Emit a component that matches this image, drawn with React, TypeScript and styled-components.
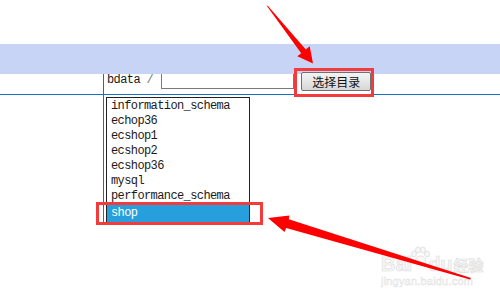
import React from "react";
import styled, { createGlobalStyle } from "styled-components";

const GlobalStyle = createGlobalStyle`
  html, body {
    margin: 0;
    padding: 0;
    background: #ffffff;
  }
  * {
    box-sizing: border-box;
  }
`;

const Page = styled.div`
  position: relative;
  width: 500px;
  height: 300px;
  overflow: hidden;
  background: #ffffff;
  font-family: "Liberation Mono", "DejaVu Sans Mono", monospace;
`;

const TopSpace = styled.div`
  height: 44px;
`;

const Band = styled.div`
  height: 30px;
  background: #c8d4f5;
`;

const FormRow = styled.div`
  display: flex;
  align-items: flex-start;
  height: 21px;
  border-bottom: 1px solid #1670c4;
`;

const Gutter = styled.div`
  width: 104px;
  flex: none;
  align-self: stretch;
  border-right: 1px solid #1670c4;
`;

const Label = styled.span`
  margin-left: 3px;
  font-size: 12px;
  line-height: 12px;
  letter-spacing: -0.6px;
  color: #1a1a1a;

  em {
    font-style: normal;
    color: #777;
  }
`;

const PathInput = styled.input`
  margin-left: 8px;
  width: 133px;
  height: 15px;
  padding: 0;
  border: 1px solid #7a7a7a;
  border-top: none;
  background: #fff;
  outline: none;
`;

const Button = styled.button`
  margin: -2px 0 0 7px;
  width: 70px;
  height: 19px;
  padding: 0;
  border: 1px solid #707070;
  border-radius: 2px;
  background: linear-gradient(#f3f3f3, #e6e6e6 50%, #d6d6d6);
  font-family: "Noto Sans CJK SC", "Noto Sans", sans-serif;
  font-size: 12px;
  line-height: 17px;
  color: #111;
`;

const ListRow = styled.div`
  display: flex;
  align-items: flex-start;
`;

const ListBox = styled.ul`
  margin: 2px 0 0 2px;
  padding: 1px 0 0;
  width: 144px;
  list-style: none;
  border: 1px solid #222;
`;

const Option = styled.li<{ $selected?: boolean }>`
  height: ${(p) => (p.$selected ? "18px" : "15px")};
  padding-left: 4px;
  font-size: 12px;
  line-height: ${(p) => (p.$selected ? "18px" : "15px")};
  letter-spacing: -0.6px;
  white-space: nowrap;
  color: ${(p) => (p.$selected ? "#ffffff" : "#1a1a1a")};
  background: ${(p) => (p.$selected ? "#269fdc" : "transparent")};
`;

const Highlight = styled.div<{ $x: number; $y: number; $w: number; $h: number }>`
  position: absolute;
  left: ${(p) => p.$x}px;
  top: ${(p) => p.$y}px;
  width: ${(p) => p.$w}px;
  height: ${(p) => p.$h}px;
  border: 3px solid #f43b3b;
  pointer-events: none;
`;

const Overlay = styled.svg`
  position: absolute;
  left: 0;
  top: 0;
  pointer-events: none;
`;

const Watermark = styled.div`
  position: absolute;
  left: 381px;
  top: 244px;
  color: #f7f7f7;
  -webkit-text-stroke: 0.7px #e0e0e0;
  font-family: "Liberation Sans", Arial, sans-serif;
  pointer-events: none;
`;

const MarkLine = styled.div`
  display: flex;
  align-items: flex-end;
  height: 30px;
  font-size: 20px;
  font-weight: bold;
  line-height: 20px;
  white-space: nowrap;
`;

const MarkCn = styled.span`
  margin-left: 1px;
  font-family: "Noto Sans CJK SC", sans-serif;
  font-size: 15px;
  font-weight: bold;
  line-height: 18px;
`;

const MarkUrl = styled.div`
  font-size: 11px;
  line-height: 14px;
  letter-spacing: 0.2px;
  -webkit-text-stroke: 0.4px #e0e0e0;
`;

const Paw = () => (
  <svg width="22" height="20" viewBox="0 0 22 20" style={{ marginLeft: -3, marginRight: -3, marginBottom: 8 }}>
    <g fill="#f8f8f8" stroke="#dedede" strokeWidth="0.9">
      <ellipse cx="5" cy="8" rx="2.4" ry="3" />
      <ellipse cx="9" cy="4" rx="2.4" ry="3" />
      <ellipse cx="14" cy="4" rx="2.4" ry="3" />
      <ellipse cx="18" cy="8" rx="2.4" ry="3" />
      <path d="M11.5 10 C7 10 5 15 7 17.5 C9 19 14 19 16 17.5 C18 15 16 10 11.5 10 Z" />
    </g>
  </svg>
);

const databases = [
  "information_schema",
  "echop36",
  "ecshop1",
  "ecshop2",
  "ecshop36",
  "mysql",
  "performance_schema",
  "shop",
];

export default function App() {
  return (
    <Page>
      <GlobalStyle />
      <TopSpace />
      <Band />
      <FormRow>
        <Gutter />
        <Label>
          bdata <em>/</em>
        </Label>
        <PathInput readOnly value="" />
        <Button>选择目录</Button>
      </FormRow>
      <ListRow>
        <Gutter />
        <ListBox>
          {databases.map((db) => (
            <Option key={db} $selected={db === "shop"}>
              {db}
            </Option>
          ))}
        </ListBox>
      </ListRow>

      <Highlight $x={294} $y={68} $w={80} $h={29} />
      <Highlight $x={96} $y={202} $w={167} $h={23} />

      <Watermark>
        <MarkLine>
          Bai
          <Paw />
          du
          <MarkCn>经验</MarkCn>
        </MarkLine>
        <MarkUrl>jingyan.baidu.com</MarkUrl>
      </Watermark>

      <Overlay width="500" height="300" viewBox="0 0 500 300">
        <polygon
          fill="#ff0000"
          points="266.5,5.5 268,6 305.8,49.4 309.7,46.3 313,63.5 297.3,56.3 301.2,53.2"
        />
        <polygon
          fill="#ff0000"
          points="268,218 289.5,215.5 288.8,219.3 471,278 470,279.5 286.2,228 284.5,232"
        />
      </Overlay>
    </Page>
  );
}
